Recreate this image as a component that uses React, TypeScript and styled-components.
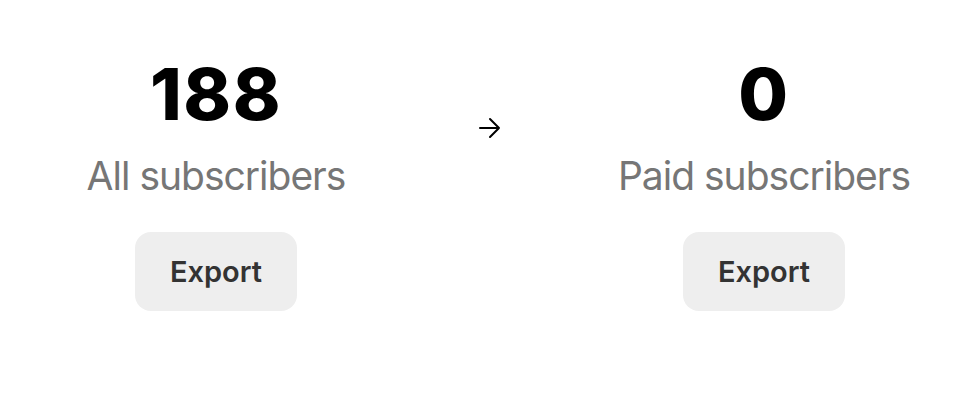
import React, { FC } from "react";
import styled, { createGlobalStyle } from "styled-components";

const GlobalStyle = createGlobalStyle`
  body {
    margin: 0;
    background: #fff;
    font-family: Inter, "Noto Sans", sans-serif;
  }
`;

interface StatProps {
  count: number;
  label: string;
}

const Stat: FC<StatProps> = ({ count, label }) => (
  <StatColumn>
    <Count>{count}</Count>
    <Label>{label}</Label>
    <ExportButton type="button">Export</ExportButton>
  </StatColumn>
);

const Arrow: FC = () => (
  <svg width="24" height="22" viewBox="0 0 24 22" fill="none">
    <path
      d="M2 11h19M12 2l9 9-9 9"
      stroke="#000"
      strokeWidth="2"
      strokeLinecap="round"
      strokeLinejoin="round"
    />
  </svg>
);

const App: FC = () => (
  <>
    <GlobalStyle />
    <Page>
      <Stat count={188} label="All subscribers" />
      <ArrowCell>
        <Arrow />
      </ArrowCell>
      <Stat count={0} label="Paid subscribers" />
    </Page>
  </>
);

const Page = styled.div`
  display: flex;
  align-items: flex-start;
  padding: 58px 0 0 18px;
`;

const StatColumn = styled.div`
  width: 396px;
  display: flex;
  flex-direction: column;
  align-items: center;
`;

const Count = styled.div`
  font-size: 72px;
  line-height: 1;
  font-weight: 800;
  color: #000;
  letter-spacing: 1.5px;
`;

const Label = styled.div`
  margin-top: 26px;
  font-size: 39px;
  line-height: 1;
  font-weight: 400;
  color: #767676;
  letter-spacing: -1px;
`;

const ExportButton = styled.button`
  margin-top: 37px;
  width: 162px;
  height: 79px;
  border: none;
  border-radius: 16px;
  background: #eeeeee;
  color: #333;
  font-family: Inter, "Noto Sans", sans-serif;
  font-size: 29px;
  font-weight: 600;
  cursor: pointer;
`;

const ArrowCell = styled.div`
  width: 152px;
  display: flex;
  justify-content: center;
  padding-top: 59px;
`;

export default App;
